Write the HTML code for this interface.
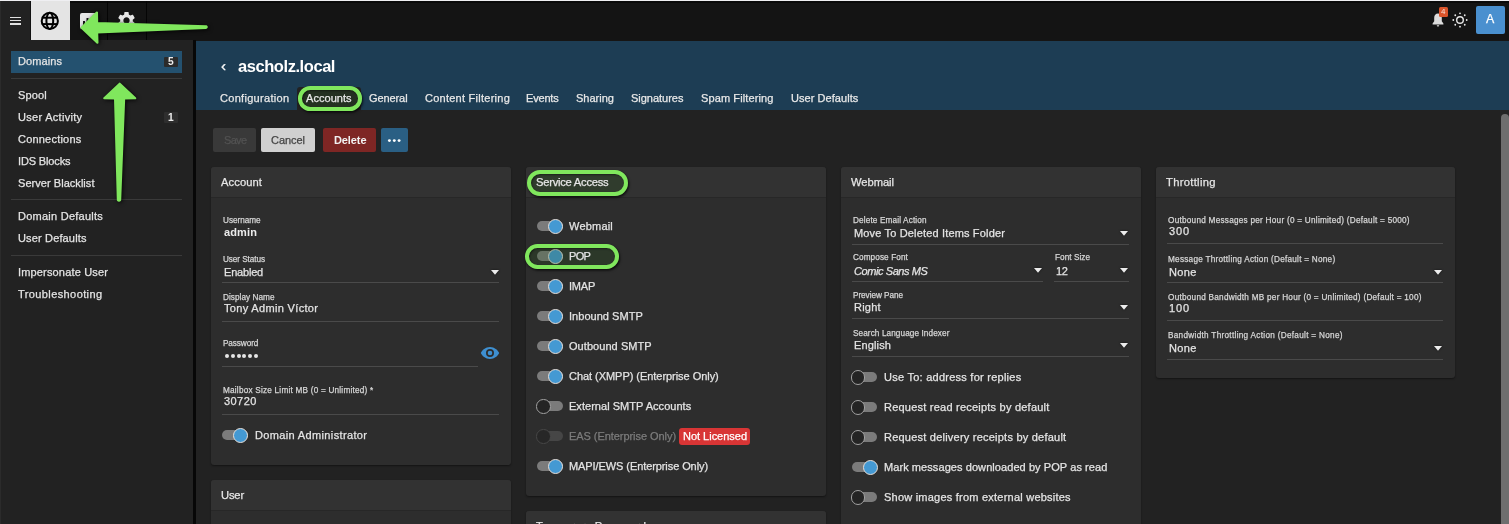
<!DOCTYPE html>
<html><head><meta charset="utf-8"><style>
html,body{margin:0;padding:0;}
body{width:1509px;height:524px;overflow:hidden;position:relative;background:#222;font-family:"Liberation Sans",sans-serif;}
body>div,body>svg{position:absolute;}
.t{line-height:1;white-space:nowrap;z-index:3;will-change:transform;-webkit-text-stroke:0.25px currentColor;}
</style></head><body>
<div style="left:0px;top:0px;width:1509px;height:1px;background:#efeff2;border-radius:0px;"></div>
<div style="left:0px;top:1px;width:1509px;height:39px;background:#141414;border-radius:0px;"></div>
<div style="left:0px;top:1px;width:1509px;height:1.5px;background:#0a0a0a;border-radius:0px;"></div>
<div style="left:0px;top:1px;width:31px;height:39px;background:#222222;border-radius:0px;"></div>
<div style="left:31px;top:1px;width:38.5px;height:39px;background:#e4e4e4;border-radius:0px;"></div>
<div style="left:30px;top:1px;width:1px;height:40px;background:#111111;border-radius:0px;"></div>
<div style="left:107px;top:1px;width:1px;height:39px;background:#050505;border-radius:0px;"></div>
<div style="left:146px;top:1px;width:1px;height:39px;background:#050505;border-radius:0px;"></div>
<div style="left:9.5px;top:16.8px;width:11.5px;height:1.4px;background:#e0e0e0;border-radius:0px;"></div>
<div style="left:9.5px;top:19.9px;width:11.5px;height:1.4px;background:#e0e0e0;border-radius:0px;"></div>
<div style="left:9.5px;top:23.2px;width:11.5px;height:1.4px;background:#e0e0e0;border-radius:0px;"></div>
<svg style="left:40px;top:10.7px" width="20" height="20" viewBox="0 0 20 20"><g fill="none" stroke="#000" stroke-width="2"><circle cx="9.8" cy="9.9" r="8.1"/><ellipse cx="9.8" cy="9.9" rx="3.4" ry="8.1"/><line x1="1.8" y1="6.7" x2="17.8" y2="6.7"/><line x1="1.8" y1="13.1" x2="17.8" y2="13.1"/></g></svg>
<svg style="left:79px;top:12px" width="20" height="18" viewBox="0 0 20 18"><rect x="1" y="1" width="17" height="16" rx="2" fill="#e6e6e6"/><rect x="4" y="9" width="2" height="6" fill="#151515"/><rect x="7.5" y="6" width="2" height="9" fill="#151515"/><rect x="11" y="8" width="2" height="7" fill="#151515"/></svg>
<svg style="left:116.3px;top:10.3px" width="21" height="21" viewBox="0 0 24 24"><path fill="#e6e6e6" d="M19.14 12.94c.04-.3.06-.61.06-.94 0-.32-.02-.64-.07-.94l2.03-1.58c.18-.14.23-.41.12-.61l-1.92-3.32c-.12-.22-.37-.29-.59-.22l-2.39.96c-.5-.38-1.03-.7-1.62-.94l-.36-2.54c-.04-.24-.24-.41-.48-.41h-3.84c-.24 0-.43.17-.47.41l-.36 2.54c-.59.24-1.13.57-1.62.94l-2.39-.96c-.22-.08-.47 0-.59.22L2.74 8.87c-.12.21-.08.47.12.61l2.03 1.58c-.05.3-.09.63-.09.94s.02.64.07.94l-2.03 1.58c-.18.14-.23.41-.12.61l1.92 3.32c.12.22.37.29.59.22l2.39-.96c.5.38 1.03.7 1.62.94l.36 2.54c.05.24.24.41.48.41h3.84c.24 0 .44-.17.47-.41l.36-2.54c.59-.24 1.13-.56 1.62-.94l2.39.96c.22.08.47 0 .59-.22l1.92-3.32c.12-.22.07-.47-.12-.61l-2.01-1.58zM12 15.6c-1.98 0-3.6-1.62-3.6-3.6s1.62-3.6 3.6-3.6 3.6 1.62 3.6 3.6-1.62 3.6-3.6 3.6z"/></svg>
<svg style="left:1430px;top:12px" width="16" height="16" viewBox="0 0 16 16"><path fill="#dcdcdc" d="M8 1.5c-2.3 0-3.8 1.8-3.8 4.2v3.6L2.6 11.6v.9h10.8v-.9l-1.6-2.3V5.7C11.8 3.3 10.3 1.5 8 1.5z"/><path fill="#dcdcdc" d="M6.8 13.2h2.4c0 .8-.5 1.4-1.2 1.4s-1.2-.6-1.2-1.4z"/></svg>
<div style="left:1439px;top:6.5px;width:9px;height:10.5px;background:#d9542b;border-radius:1.5px;"></div>
<div class="t" style="left:1441.30px;top:8.23px;font-size:8.00px;color:#f6e0d8;-webkit-text-stroke:0;">4</div>
<svg style="left:1452px;top:12px" width="16" height="16" viewBox="0 0 16 16"><circle cx="8" cy="8" r="3.3" fill="none" stroke="#e8e8e8" stroke-width="1.4"/><g fill="#e8e8e8"><circle cx="8" cy="1.3" r="0.9"/><circle cx="8" cy="14.7" r="0.9"/><circle cx="1.3" cy="8" r="0.9"/><circle cx="14.7" cy="8" r="0.9"/><circle cx="3.26" cy="3.26" r="0.9"/><circle cx="12.74" cy="12.74" r="0.9"/><circle cx="3.26" cy="12.74" r="0.9"/><circle cx="12.74" cy="3.26" r="0.9"/></g></svg>
<div style="left:1476px;top:6px;width:29px;height:28px;background:#4a90cf;border-radius:2px;"></div>
<div class="t" style="left:1486.30px;top:13.10px;font-size:12.40px;color:#ffffff;">A</div>
<div style="left:0px;top:40px;width:193px;height:484px;background:#222222;border-radius:0px;"></div>
<div style="left:193px;top:40px;width:3px;height:484px;background:#070707;border-radius:0px;"></div>
<div style="left:11px;top:51px;width:171px;height:22px;background:#24516f;border-radius:0px;"></div>
<div class="t" style="left:18.30px;top:55.89px;font-size:11.00px;color:#e4e4e4;letter-spacing:0.085px;">Domains</div>
<div style="left:164px;top:56.5px;width:14px;height:10.5px;background:#2b2b2b;border-radius:1px;"></div>
<div class="t" style="left:168.20px;top:57.17px;font-size:10.20px;color:#ececec;font-weight:700;-webkit-text-stroke:0;">5</div>
<div style="left:11px;top:78px;width:171px;height:1px;background:#3a3a3a;border-radius:0px;"></div>
<div class="t" style="left:18.30px;top:89.89px;font-size:11.00px;color:#e4e4e4;letter-spacing:0.154px;">Spool</div>
<div class="t" style="left:18.30px;top:111.89px;font-size:11.00px;color:#e4e4e4;letter-spacing:0.292px;">User Activity</div>
<div class="t" style="left:18.30px;top:133.89px;font-size:11.00px;color:#e4e4e4;letter-spacing:0.205px;">Connections</div>
<div class="t" style="left:18.30px;top:155.89px;font-size:11.00px;color:#e4e4e4;letter-spacing:-0.139px;">IDS Blocks</div>
<div class="t" style="left:18.30px;top:177.89px;font-size:11.00px;color:#e4e4e4;letter-spacing:0.044px;">Server Blacklist</div>
<div style="left:164px;top:112px;width:14px;height:11px;background:#2e2e2e;border-radius:1px;"></div>
<div class="t" style="left:168.40px;top:112.97px;font-size:10.20px;color:#ececec;font-weight:700;-webkit-text-stroke:0;">1</div>
<div style="left:11px;top:199px;width:171px;height:1px;background:#3a3a3a;border-radius:0px;"></div>
<div class="t" style="left:18.30px;top:211.09px;font-size:11.00px;color:#e4e4e4;letter-spacing:0.253px;">Domain Defaults</div>
<div class="t" style="left:18.30px;top:233.09px;font-size:11.00px;color:#e4e4e4;letter-spacing:0.151px;">User Defaults</div>
<div style="left:11px;top:255px;width:171px;height:1px;background:#3a3a3a;border-radius:0px;"></div>
<div class="t" style="left:18.30px;top:266.99px;font-size:11.00px;color:#e4e4e4;letter-spacing:0.161px;">Impersonate User</div>
<div class="t" style="left:18.30px;top:288.89px;font-size:11.00px;color:#e4e4e4;letter-spacing:0.402px;">Troubleshooting</div>
<div style="left:0px;top:1px;width:1px;height:523px;background:#2b2b2b;border-radius:0px;"></div>
<div style="left:196px;top:40px;width:1313px;height:484px;background:#222222;border-radius:0px;"></div>
<div style="left:196px;top:40px;width:1313px;height:70px;background:#1d3d54;border-radius:0px;"></div>
<div style="left:196px;top:40px;width:1313px;height:1px;background:#161514;border-radius:0px;"></div>
<div class="t" style="left:221.00px;top:57.80px;font-size:15.00px;color:#ffffff;">‹</div>
<div class="t" style="left:237.80px;top:58.33px;font-size:16.50px;color:#ffffff;font-weight:700;-webkit-text-stroke:0;letter-spacing:-0.438px;-webkit-text-stroke:0;">ascholz.local</div>
<div style="left:297px;top:87px;width:64px;height:23px;background:#222222;border-radius:3px 3px 0 0px;"></div>
<div class="t" style="left:219.50px;top:92.89px;font-size:11.00px;color:#e8e8e8;letter-spacing:0.298px;">Configuration</div>
<div class="t" style="left:306.00px;top:92.89px;font-size:11.00px;color:#e8e8e8;letter-spacing:0.044px;">Accounts</div>
<div class="t" style="left:369.00px;top:92.89px;font-size:11.00px;color:#e8e8e8;letter-spacing:-0.090px;">General</div>
<div class="t" style="left:424.50px;top:92.89px;font-size:11.00px;color:#e8e8e8;letter-spacing:0.253px;">Content Filtering</div>
<div class="t" style="left:526.20px;top:92.89px;font-size:11.00px;color:#e8e8e8;letter-spacing:-0.188px;">Events</div>
<div class="t" style="left:575.80px;top:92.89px;font-size:11.00px;color:#e8e8e8;letter-spacing:0.013px;">Sharing</div>
<div class="t" style="left:630.90px;top:92.89px;font-size:11.00px;color:#e8e8e8;letter-spacing:-0.019px;">Signatures</div>
<div class="t" style="left:700.70px;top:92.89px;font-size:11.00px;color:#e8e8e8;letter-spacing:0.114px;">Spam Filtering</div>
<div class="t" style="left:790.50px;top:92.89px;font-size:11.00px;color:#e8e8e8;letter-spacing:0.059px;">User Defaults</div>
<div style="left:213px;top:128px;width:43px;height:23.7px;background:#393939;border-radius:2px;"></div>
<div class="t" style="left:223.50px;top:135.09px;font-size:11.00px;color:#525252;letter-spacing:-0.693px;">Save</div>
<div style="left:261px;top:128px;width:54px;height:23.7px;background:#d0d0d0;border-radius:2px;"></div>
<div class="t" style="left:271.00px;top:135.09px;font-size:11.00px;color:#444444;letter-spacing:-0.040px;">Cancel</div>
<div style="left:323px;top:128px;width:53px;height:23.7px;background:#7e2624;border-radius:2px;"></div>
<div class="t" style="left:333.70px;top:135.09px;font-size:11.00px;color:#f2f2f2;font-weight:700;-webkit-text-stroke:0;letter-spacing:-0.102px;">Delete</div>
<div style="left:381px;top:128px;width:27px;height:23.7px;background:#2a5f84;border-radius:2px;"></div>
<svg style="left:385px;top:137px" width="19" height="7" viewBox="0 0 19 7"><g fill="#fff"><circle cx="4.4" cy="3.6" r="1.45"/><circle cx="9.3" cy="3.6" r="1.45"/><circle cx="14.1" cy="3.6" r="1.45"/></g></svg>
<div style="left:211.4px;top:167px;width:299.6px;height:297.8px;background:#2d2d2d;border-radius:3px;box-shadow:0 1px 2px rgba(0,0,0,0.45);"></div>
<div style="left:211.4px;top:167px;width:299.6px;height:30px;background:#323232;border-radius:3px 3px 0 0px;"></div>
<div style="left:211.4px;top:197px;width:299.6px;height:1px;background:#272727;border-radius:0px;"></div>
<div class="t" style="left:221.40px;top:177.12px;font-size:11.20px;color:#e6e6e6;letter-spacing:0.076px;">Account</div>
<div class="t" style="left:223.00px;top:216.96px;font-size:8.20px;color:#d6d6d6;letter-spacing:-0.015px;">Username</div>
<div class="t" style="left:224.00px;top:227.09px;font-size:11.00px;color:#ececec;font-weight:700;-webkit-text-stroke:0;letter-spacing:0.122px;">admin</div>
<div class="t" style="left:222.90px;top:256.26px;font-size:8.20px;color:#d6d6d6;letter-spacing:-0.076px;">User Status</div>
<div class="t" style="left:224.30px;top:266.89px;font-size:11.00px;color:#e4e4e4;letter-spacing:-0.195px;">Enabled</div>
<div style="left:222.3px;top:282.4px;width:277px;height:1px;background:#4a4a4a;border-radius:0px;"></div>
<svg style="left:490.5px;top:269.8px;filter:drop-shadow(0 0 1px rgba(0,0,0,0.6))" width="8" height="5" viewBox="0 0 8 5"><path d="M0 0H8L4 4.8Z" fill="#ececec"/></svg>
<div class="t" style="left:222.90px;top:294.36px;font-size:8.20px;color:#d6d6d6;letter-spacing:0.047px;">Display Name</div>
<div class="t" style="left:224.30px;top:303.29px;font-size:11.00px;color:#e4e4e4;letter-spacing:0.333px;">Tony Admin Víctor</div>
<div style="left:222.3px;top:320.5px;width:277px;height:1px;background:#4a4a4a;border-radius:0px;"></div>
<div class="t" style="left:222.90px;top:340.36px;font-size:8.20px;color:#d6d6d6;letter-spacing:-0.088px;">Password</div>
<div style="left:222.3px;top:366.3px;width:256px;height:1px;background:#4a4a4a;border-radius:0px;"></div>
<div style="left:224.7px;top:353.8px;width:4px;height:4px;border-radius:50%;background:#e6e6e6"></div>
<div style="left:230.6px;top:353.8px;width:4px;height:4px;border-radius:50%;background:#e6e6e6"></div>
<div style="left:236.5px;top:353.8px;width:4px;height:4px;border-radius:50%;background:#e6e6e6"></div>
<div style="left:242.4px;top:353.8px;width:4px;height:4px;border-radius:50%;background:#e6e6e6"></div>
<div style="left:248.3px;top:353.8px;width:4px;height:4px;border-radius:50%;background:#e6e6e6"></div>
<div style="left:254.2px;top:353.8px;width:4px;height:4px;border-radius:50%;background:#e6e6e6"></div>
<svg style="left:480px;top:346px" width="20" height="14" viewBox="0 0 20 14"><path fill="#3e8fd0" d="M10 1C5.5 1 2 4.2 0.8 7 2 9.8 5.5 13 10 13s8-3.2 9.2-6C18 4.2 14.5 1 10 1zm0 10a4 4 0 1 1 0-8 4 4 0 0 1 0 8zm0-6.3a2.3 2.3 0 1 0 0 4.6 2.3 2.3 0 0 0 0-4.6z"/></svg>
<div class="t" style="left:222.90px;top:387.46px;font-size:8.20px;color:#d6d6d6;letter-spacing:0.222px;">Mailbox Size Limit MB (0 = Unlimited) *</div>
<div class="t" style="left:224.30px;top:396.39px;font-size:11.00px;color:#e4e4e4;letter-spacing:0.443px;">30720</div>
<div style="left:222.3px;top:413.6px;width:277px;height:1px;background:#4a4a4a;border-radius:0px;"></div>
<div style="left:222px;top:430.4px;width:25.5px;height:10px;background:#7b7b7b;border-radius:5px;"></div>
<div style="left:233.2px;top:427.9px;width:13px;height:13px;border-radius:50%;background:#4499d3;border:1px solid #e6ddd6;"></div>
<div class="t" style="left:254.50px;top:429.69px;font-size:11.00px;color:#e4e4e4;letter-spacing:0.358px;">Domain Administrator</div>
<div style="left:211.4px;top:480px;width:299.6px;height:60px;background:#2d2d2d;border-radius:3px;box-shadow:0 1px 2px rgba(0,0,0,0.45);"></div>
<div style="left:211.4px;top:480px;width:299.6px;height:30px;background:#323232;border-radius:3px 3px 0 0px;"></div>
<div style="left:211.4px;top:510px;width:299.6px;height:1px;background:#272727;border-radius:0px;"></div>
<div class="t" style="left:221.40px;top:490.12px;font-size:11.20px;color:#e6e6e6;letter-spacing:-0.162px;">User</div>
<div style="left:526.4px;top:167px;width:299.6px;height:328.5px;background:#2d2d2d;border-radius:3px;box-shadow:0 1px 2px rgba(0,0,0,0.45);"></div>
<div style="left:526.4px;top:167px;width:299.6px;height:30px;background:#323232;border-radius:3px 3px 0 0px;"></div>
<div style="left:526.4px;top:197px;width:299.6px;height:1px;background:#272727;border-radius:0px;"></div>
<div class="t" style="left:536.40px;top:177.12px;font-size:11.20px;color:#e6e6e6;letter-spacing:-0.246px;">Service Access</div>
<div style="left:537px;top:221.4px;width:25.5px;height:10px;background:#7b7b7b;border-radius:5px;"></div>
<div style="left:548.2px;top:218.9px;width:13px;height:13px;border-radius:50%;background:#4499d3;border:1px solid #e6ddd6;"></div>
<div class="t" style="left:569.00px;top:220.89px;font-size:11.00px;color:#e4e4e4;letter-spacing:0.202px;">Webmail</div>
<div style="left:537px;top:251.39999999999998px;width:25.5px;height:10px;background:#7b7b7b;border-radius:5px;"></div>
<div style="left:548.2px;top:248.9px;width:13px;height:13px;border-radius:50%;background:#4499d3;border:1px solid #e6ddd6;"></div>
<div class="t" style="left:569.00px;top:250.89px;font-size:11.00px;color:#e4e4e4;letter-spacing:-0.644px;">POP</div>
<div style="left:537px;top:281.4px;width:25.5px;height:10px;background:#7b7b7b;border-radius:5px;"></div>
<div style="left:548.2px;top:278.9px;width:13px;height:13px;border-radius:50%;background:#4499d3;border:1px solid #e6ddd6;"></div>
<div class="t" style="left:569.00px;top:280.89px;font-size:11.00px;color:#e4e4e4;letter-spacing:-0.198px;">IMAP</div>
<div style="left:537px;top:311.4px;width:25.5px;height:10px;background:#7b7b7b;border-radius:5px;"></div>
<div style="left:548.2px;top:308.9px;width:13px;height:13px;border-radius:50%;background:#4499d3;border:1px solid #e6ddd6;"></div>
<div class="t" style="left:569.00px;top:310.89px;font-size:11.00px;color:#e4e4e4;letter-spacing:0.036px;">Inbound SMTP</div>
<div style="left:537px;top:341.4px;width:25.5px;height:10px;background:#7b7b7b;border-radius:5px;"></div>
<div style="left:548.2px;top:338.9px;width:13px;height:13px;border-radius:50%;background:#4499d3;border:1px solid #e6ddd6;"></div>
<div class="t" style="left:569.00px;top:340.89px;font-size:11.00px;color:#e4e4e4;letter-spacing:0.060px;">Outbound SMTP</div>
<div style="left:537px;top:371.4px;width:25.5px;height:10px;background:#7b7b7b;border-radius:5px;"></div>
<div style="left:548.2px;top:368.9px;width:13px;height:13px;border-radius:50%;background:#4499d3;border:1px solid #e6ddd6;"></div>
<div class="t" style="left:569.00px;top:370.89px;font-size:11.00px;color:#e4e4e4;letter-spacing:-0.044px;">Chat (XMPP) (Enterprise Only)</div>
<div style="left:537px;top:401.4px;width:25.5px;height:10px;background:#7b7b7b;border-radius:5px;"></div>
<div style="left:536.2px;top:399.1px;width:12.6px;height:12.6px;border-radius:50%;background:#242424;border:1px solid #a2a2a2;"></div>
<div class="t" style="left:569.00px;top:400.89px;font-size:11.00px;color:#e4e4e4;letter-spacing:0.034px;">External SMTP Accounts</div>
<div style="left:537px;top:431.4px;width:25.5px;height:10px;background:#464646;border-radius:5px;"></div>
<div style="left:536.2px;top:429.1px;width:12.6px;height:12.6px;border-radius:50%;background:#272727;border:1px solid #474747;"></div>
<div class="t" style="left:569.00px;top:430.89px;font-size:11.00px;color:#7c7c7c;letter-spacing:-0.057px;">EAS (Enterprise Only)</div>
<div style="left:537px;top:461.4px;width:25.5px;height:10px;background:#7b7b7b;border-radius:5px;"></div>
<div style="left:548.2px;top:458.9px;width:13px;height:13px;border-radius:50%;background:#4499d3;border:1px solid #e6ddd6;"></div>
<div class="t" style="left:569.00px;top:460.89px;font-size:11.00px;color:#e4e4e4;letter-spacing:-0.084px;">MAPI/EWS (Enterprise Only)</div>
<div style="left:679px;top:428px;width:70.8px;height:16.5px;background:#d83535;border-radius:3px;"></div>
<div class="t" style="left:682.50px;top:431.09px;font-size:11.00px;color:#ffffff;letter-spacing:-0.017px;">Not Licensed</div>
<div style="left:526.4px;top:511.2px;width:299.6px;height:60px;background:#2d2d2d;border-radius:3px;box-shadow:0 1px 2px rgba(0,0,0,0.45);"></div>
<div style="left:526.4px;top:511.2px;width:299.6px;height:30px;background:#323232;border-radius:3px 3px 0 0px;"></div>
<div style="left:526.4px;top:541.2px;width:299.6px;height:1px;background:#272727;border-radius:0px;"></div>
<div class="t" style="left:536.40px;top:521.32px;font-size:11.20px;color:#e6e6e6;letter-spacing:0.290px;">Temporary Password</div>
<div style="left:841px;top:167px;width:299.5px;height:360px;background:#2d2d2d;border-radius:3px;box-shadow:0 1px 2px rgba(0,0,0,0.45);"></div>
<div style="left:841px;top:167px;width:299.5px;height:30px;background:#323232;border-radius:3px 3px 0 0px;"></div>
<div style="left:841px;top:197px;width:299.5px;height:1px;background:#272727;border-radius:0px;"></div>
<div class="t" style="left:851.00px;top:177.12px;font-size:11.20px;color:#e6e6e6;letter-spacing:-0.051px;">Webmail</div>
<div class="t" style="left:852.60px;top:217.36px;font-size:8.20px;color:#d6d6d6;letter-spacing:0.142px;">Delete Email Action</div>
<div class="t" style="left:854.00px;top:227.99px;font-size:11.00px;color:#e4e4e4;letter-spacing:0.160px;">Move To Deleted Items Folder</div>
<div style="left:852px;top:243.5px;width:277px;height:1px;background:#4a4a4a;border-radius:0px;"></div>
<svg style="left:1120.2px;top:230.9px;filter:drop-shadow(0 0 1px rgba(0,0,0,0.6))" width="8" height="5" viewBox="0 0 8 5"><path d="M0 0H8L4 4.8Z" fill="#ececec"/></svg>
<div class="t" style="left:852.60px;top:253.76px;font-size:8.20px;color:#d6d6d6;letter-spacing:0.102px;">Compose Font</div>
<div class="t" style="left:854.00px;top:265.59px;font-size:11.00px;color:#e4e4e4;letter-spacing:-0.419px;font-style:italic;">Comic Sans MS</div>
<div style="left:852px;top:280.5px;width:191px;height:1px;background:#4a4a4a;border-radius:0px;"></div>
<svg style="left:1034.2px;top:267.9px;filter:drop-shadow(0 0 1px rgba(0,0,0,0.6))" width="8" height="5" viewBox="0 0 8 5"><path d="M0 0H8L4 4.8Z" fill="#ececec"/></svg>
<div class="t" style="left:1054.50px;top:253.76px;font-size:8.20px;color:#d6d6d6;letter-spacing:0.052px;">Font Size</div>
<div class="t" style="left:1055.90px;top:265.59px;font-size:11.00px;color:#e4e4e4;letter-spacing:-0.367px;">12</div>
<div style="left:1053.9px;top:280.5px;width:75.2px;height:1px;background:#4a4a4a;border-radius:0px;"></div>
<svg style="left:1120.3px;top:267.9px;filter:drop-shadow(0 0 1px rgba(0,0,0,0.6))" width="8" height="5" viewBox="0 0 8 5"><path d="M0 0H8L4 4.8Z" fill="#ececec"/></svg>
<div class="t" style="left:852.60px;top:291.56px;font-size:8.20px;color:#d6d6d6;letter-spacing:-0.049px;">Preview Pane</div>
<div class="t" style="left:854.00px;top:302.19px;font-size:11.00px;color:#e4e4e4;letter-spacing:0.224px;">Right</div>
<div style="left:852px;top:317.7px;width:277px;height:1px;background:#4a4a4a;border-radius:0px;"></div>
<svg style="left:1120.2px;top:305.1px;filter:drop-shadow(0 0 1px rgba(0,0,0,0.6))" width="8" height="5" viewBox="0 0 8 5"><path d="M0 0H8L4 4.8Z" fill="#ececec"/></svg>
<div class="t" style="left:852.60px;top:329.66px;font-size:8.20px;color:#d6d6d6;letter-spacing:0.097px;">Search Language Indexer</div>
<div class="t" style="left:854.00px;top:340.29px;font-size:11.00px;color:#e4e4e4;letter-spacing:0.146px;">English</div>
<div style="left:852px;top:355.8px;width:277px;height:1px;background:#4a4a4a;border-radius:0px;"></div>
<svg style="left:1120.2px;top:343.2px;filter:drop-shadow(0 0 1px rgba(0,0,0,0.6))" width="8" height="5" viewBox="0 0 8 5"><path d="M0 0H8L4 4.8Z" fill="#ececec"/></svg>
<div style="left:851.6px;top:372.3px;width:25.5px;height:10px;background:#7b7b7b;border-radius:5px;"></div>
<div style="left:850.8px;top:370.0px;width:12.6px;height:12.6px;border-radius:50%;background:#242424;border:1px solid #a2a2a2;"></div>
<div class="t" style="left:884.00px;top:371.79px;font-size:11.00px;color:#e4e4e4;letter-spacing:0.251px;">Use To: address for replies</div>
<div style="left:851.6px;top:402.3px;width:25.5px;height:10px;background:#7b7b7b;border-radius:5px;"></div>
<div style="left:850.8px;top:400.0px;width:12.6px;height:12.6px;border-radius:50%;background:#242424;border:1px solid #a2a2a2;"></div>
<div class="t" style="left:884.00px;top:401.79px;font-size:11.00px;color:#e4e4e4;letter-spacing:0.223px;">Request read receipts by default</div>
<div style="left:851.6px;top:432.3px;width:25.5px;height:10px;background:#7b7b7b;border-radius:5px;"></div>
<div style="left:850.8px;top:430.0px;width:12.6px;height:12.6px;border-radius:50%;background:#242424;border:1px solid #a2a2a2;"></div>
<div class="t" style="left:884.00px;top:431.79px;font-size:11.00px;color:#e4e4e4;letter-spacing:0.224px;">Request delivery receipts by default</div>
<div style="left:851.6px;top:462.3px;width:25.5px;height:10px;background:#7b7b7b;border-radius:5px;"></div>
<div style="left:862.8px;top:459.8px;width:13px;height:13px;border-radius:50%;background:#4499d3;border:1px solid #e6ddd6;"></div>
<div class="t" style="left:884.00px;top:461.79px;font-size:11.00px;color:#e4e4e4;letter-spacing:0.074px;">Mark messages downloaded by POP as read</div>
<div style="left:851.6px;top:492.3px;width:25.5px;height:10px;background:#7b7b7b;border-radius:5px;"></div>
<div style="left:850.8px;top:490.0px;width:12.6px;height:12.6px;border-radius:50%;background:#242424;border:1px solid #a2a2a2;"></div>
<div class="t" style="left:884.00px;top:491.79px;font-size:11.00px;color:#e4e4e4;letter-spacing:0.226px;">Show images from external websites</div>
<div style="left:1156px;top:167px;width:299.4px;height:211px;background:#2d2d2d;border-radius:3px;box-shadow:0 1px 2px rgba(0,0,0,0.45);"></div>
<div style="left:1156px;top:167px;width:299.4px;height:30px;background:#323232;border-radius:3px 3px 0 0px;"></div>
<div style="left:1156px;top:197px;width:299.4px;height:1px;background:#272727;border-radius:0px;"></div>
<div class="t" style="left:1166.00px;top:177.12px;font-size:11.20px;color:#e6e6e6;letter-spacing:0.312px;">Throttling</div>
<div class="t" style="left:1167.60px;top:216.96px;font-size:8.20px;color:#d6d6d6;letter-spacing:0.258px;">Outbound Messages per Hour (0 = Unlimited) (Default = 5000)</div>
<div class="t" style="left:1169.00px;top:225.89px;font-size:11.00px;color:#e4e4e4;letter-spacing:0.883px;">300</div>
<div style="left:1167px;top:243.1px;width:276px;height:1px;background:#4a4a4a;border-radius:0px;"></div>
<div class="t" style="left:1167.60px;top:256.06px;font-size:8.20px;color:#d6d6d6;letter-spacing:0.256px;">Message Throttling Action (Default = None)</div>
<div class="t" style="left:1169.00px;top:266.69px;font-size:11.00px;color:#e4e4e4;letter-spacing:0.326px;">None</div>
<div style="left:1167px;top:282.2px;width:276px;height:1px;background:#4a4a4a;border-radius:0px;"></div>
<svg style="left:1434.2px;top:269.6px;filter:drop-shadow(0 0 1px rgba(0,0,0,0.6))" width="8" height="5" viewBox="0 0 8 5"><path d="M0 0H8L4 4.8Z" fill="#ececec"/></svg>
<div class="t" style="left:1167.60px;top:294.26px;font-size:8.20px;color:#d6d6d6;letter-spacing:0.260px;">Outbound Bandwidth MB per Hour (0 = Unlimited) (Default = 100)</div>
<div class="t" style="left:1169.00px;top:303.19px;font-size:11.00px;color:#e4e4e4;letter-spacing:0.883px;">100</div>
<div style="left:1167px;top:320.4px;width:276px;height:1px;background:#4a4a4a;border-radius:0px;"></div>
<div class="t" style="left:1167.60px;top:332.46px;font-size:8.20px;color:#d6d6d6;letter-spacing:0.298px;">Bandwidth Throttling Action (Default = None)</div>
<div class="t" style="left:1169.00px;top:343.09px;font-size:11.00px;color:#e4e4e4;letter-spacing:0.326px;">None</div>
<div style="left:1167px;top:358.6px;width:276px;height:1px;background:#4a4a4a;border-radius:0px;"></div>
<svg style="left:1434.2px;top:346.0px;filter:drop-shadow(0 0 1px rgba(0,0,0,0.6))" width="8" height="5" viewBox="0 0 8 5"><path d="M0 0H8L4 4.8Z" fill="#ececec"/></svg>
<div style="left:1500px;top:110px;width:9px;height:414px;background:#242424;border-radius:0px;"></div>
<div style="left:1501.4px;top:114px;width:7.6px;height:420px;background:#6e6e6e;border-radius:4px 4px 0 0px;"></div>
<div style="left:297.6px;top:86px;width:56.2px;height:16.6px;border:4px solid #80e75d;border-radius:12.3px;background:rgba(45,90,30,0.25);box-shadow:1px 1.5px 2.5px rgba(0,0,0,0.75), inset 1px 1px 2px rgba(0,0,0,0.45);z-index:2;"></div>
<div style="left:527.3px;top:170px;width:92.5px;height:18px;border:4px solid #80e75d;border-radius:13.0px;background:rgba(45,90,30,0.25);box-shadow:1px 1.5px 2.5px rgba(0,0,0,0.75), inset 1px 1px 2px rgba(0,0,0,0.45);z-index:2;"></div>
<div style="left:524.7px;top:244px;width:86.8px;height:17px;border:4px solid #80e75d;border-radius:12.5px;background:rgba(45,90,30,0.25);box-shadow:1px 1.5px 2.5px rgba(0,0,0,0.75), inset 1px 1px 2px rgba(0,0,0,0.45);z-index:2;"></div>
<svg style="left:0;top:0;filter:drop-shadow(1px 1.5px 2px rgba(0,0,0,0.85));z-index:4;" width="260" height="260" viewBox="0 0 260 260">
<path fill="#80e75d" stroke="#80e75d" stroke-width="2.2" stroke-linejoin="round" d="M81.6 27.8 L96.9 12.6 L97.1 23.2 L206 26.3 Q207.4 27.1 206 27.9 L97.1 32.5 L97.4 42.7 Z"/>
<path fill="#80e75d" stroke="#80e75d" stroke-width="2.2" stroke-linejoin="round" d="M119.7 83.7 L135.2 98.2 L124.1 98.4 L120.1 200 Q119 201.4 117.9 200 L115.1 98.4 L104.3 98.2 Z"/>
</svg>
</body></html>
